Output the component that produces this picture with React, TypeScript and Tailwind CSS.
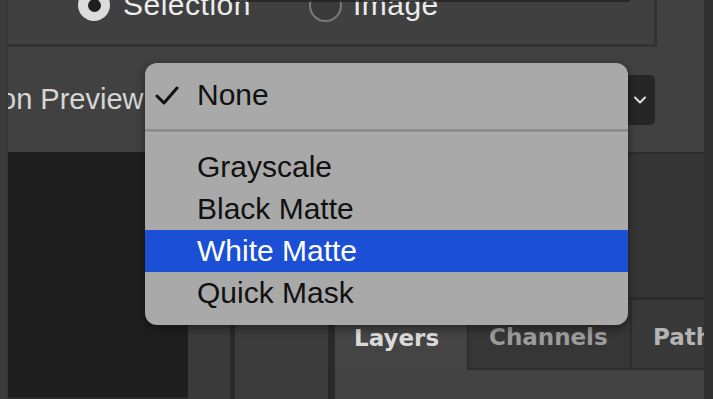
import React from "react";

const sans = { fontFamily: '"Liberation Sans", Arial, sans-serif' };
const tabFont = { fontFamily: '"DejaVu Sans", "Liberation Sans", sans-serif' };

function MenuRow({ label, active }: { label: string; active?: boolean }) {
  return (
    <div
      className={
        "h-[42px] flex items-center pl-[52px] text-[30px] leading-none " +
        (active ? "bg-[#1b4fd6] text-white" : "text-[#111111]")
      }
    >
      {label}
    </div>
  );
}

export default function App() {
  return (
    <div
      className="relative w-[713px] h-[399px] overflow-hidden bg-[#414141] flex"
      style={sans}
    >
      {/* left edge strip */}
      <div className="w-[8px] shrink-0 bg-[#3b3b3b] border-r border-[#353535]" />

      {/* main column */}
      <div className="flex-1 min-w-0 flex flex-col overflow-hidden">
        {/* top group box */}
        <div className="h-[47px] shrink-0 mr-[47px] border-b-[3px] border-r-[3px] border-[#333333] bg-[#404040] flex flex-col">
          <div className="h-[2px] ml-[222px] w-[400px] bg-[#222222] opacity-80" />
          <div className="-mt-[13px] h-[32px] flex items-center pl-[70px] text-[30px] text-[#ececec] leading-none">
            <div className="w-[32px] h-[32px] shrink-0 rounded-full bg-[#dcdcdc] flex items-center justify-center">
              <div className="w-[13px] h-[13px] rounded-full bg-[#1e1e1e]" />
            </div>
            <span className="ml-[13px] tracking-[0.5px]">Selection</span>
            <div className="ml-[58px] w-[33px] h-[33px] shrink-0 rounded-full border-2 border-[#7a7a7a] bg-[#3a3a3a]" />
            <span className="ml-[11px] tracking-[0.5px]">Image</span>
          </div>
        </div>

        {/* label + dropdown row */}
        <div className="h-[105px] shrink-0 flex items-center">
          <span className="-ml-[8px] text-[29px] text-[#d6d6d6] leading-none whitespace-nowrap">
            on Preview
          </span>
          <div className="flex-1" />
          <div className="mr-[49px] w-[150px] h-[50px] shrink-0 rounded-[5px] bg-[#262626] flex items-center justify-end pr-[9px]">
            <svg width="12" height="8" viewBox="0 0 12 8">
              <polyline
                points="1,1.5 6,6.5 11,1.5"
                fill="none"
                stroke="#e0e0e0"
                strokeWidth="2"
                strokeLinecap="round"
                strokeLinejoin="round"
              />
            </svg>
          </div>
        </div>

        {/* lower area */}
        <div className="flex-1 flex min-h-0">
          <div className="w-[180px] shrink-0 bg-[#1f1f1f] border-b-2 border-[#2c2c2c]" />
          <div className="flex-1 min-w-0 flex flex-col">
            <div className="h-[148px] shrink-0 bg-[#353535] border-t-2 border-[#2b2b2b] border-b-[3px] border-b-[#2c2c2c]" />
            <div className="flex-1 flex min-w-0">
              <div className="w-[42px] shrink-0 bg-[#3a3a3a]" />
              <div className="w-[5px] shrink-0 bg-[#2a2a2a]" />
              <div className="w-[93px] shrink-0 bg-[#3c3c3c]" />
              <div className="w-[7px] shrink-0 bg-[#2a2a2a]" />
              <div className="flex-1 min-w-0 flex flex-col overflow-hidden" style={tabFont}>
                <div className="h-[70px] shrink-0 flex text-[23px] font-bold leading-none">
                  <div className="w-[132px] shrink-0 bg-[#444444] flex items-center pl-[19px] pt-[6px] text-[#dadada]">
                    Layers
                  </div>
                  <div className="w-[163px] shrink-0 bg-[#363636] border-l-2 border-b-2 border-[#2d2d2d] flex items-center pl-[20px] pt-[6px] text-[#9c9c9c]">
                    Channels
                  </div>
                  <div className="flex-1 min-w-0 bg-[#393939] border-l-2 border-b-2 border-[#2d2d2d] flex items-center pl-[21px] pt-[6px] text-[#b4b4b4] whitespace-nowrap overflow-hidden">
                    Paths
                  </div>
                </div>
                <div className="flex-1 bg-[#434343]" />
              </div>
            </div>
          </div>
        </div>
      </div>

      {/* right edge strip */}
      <div className="w-[9px] shrink-0 bg-[#2f2f2f]" />

      {/* popup menu */}
      <div className="absolute left-[145px] top-[63px] w-[483px] h-[262px] rounded-[12px] bg-[#a9a9a9] shadow-[0_3px_10px_rgba(0,0,0,0.45)] overflow-hidden pt-[11px]">
        <div className="relative h-[42px] flex items-center pl-[52px] text-[30px] leading-none text-[#111111]">
          <svg
            className="absolute left-[10px] top-[12px]"
            width="24"
            height="20"
            viewBox="0 0 24 20"
          >
            <polyline
              points="2,10 9,17 22,2"
              fill="none"
              stroke="#111111"
              strokeWidth="3"
              strokeLinecap="round"
              strokeLinejoin="round"
            />
          </svg>
          None
        </div>
        <div className="h-[30px] flex flex-col justify-center">
          <div className="h-[3px] bg-[#8d8d8d]" />
          <div className="h-[1px] bg-[#b3b3b3]" />
        </div>
        <MenuRow label="Grayscale" />
        <MenuRow label="Black Matte" />
        <MenuRow label="White Matte" active />
        <MenuRow label="Quick Mask" />
      </div>
    </div>
  );
}
